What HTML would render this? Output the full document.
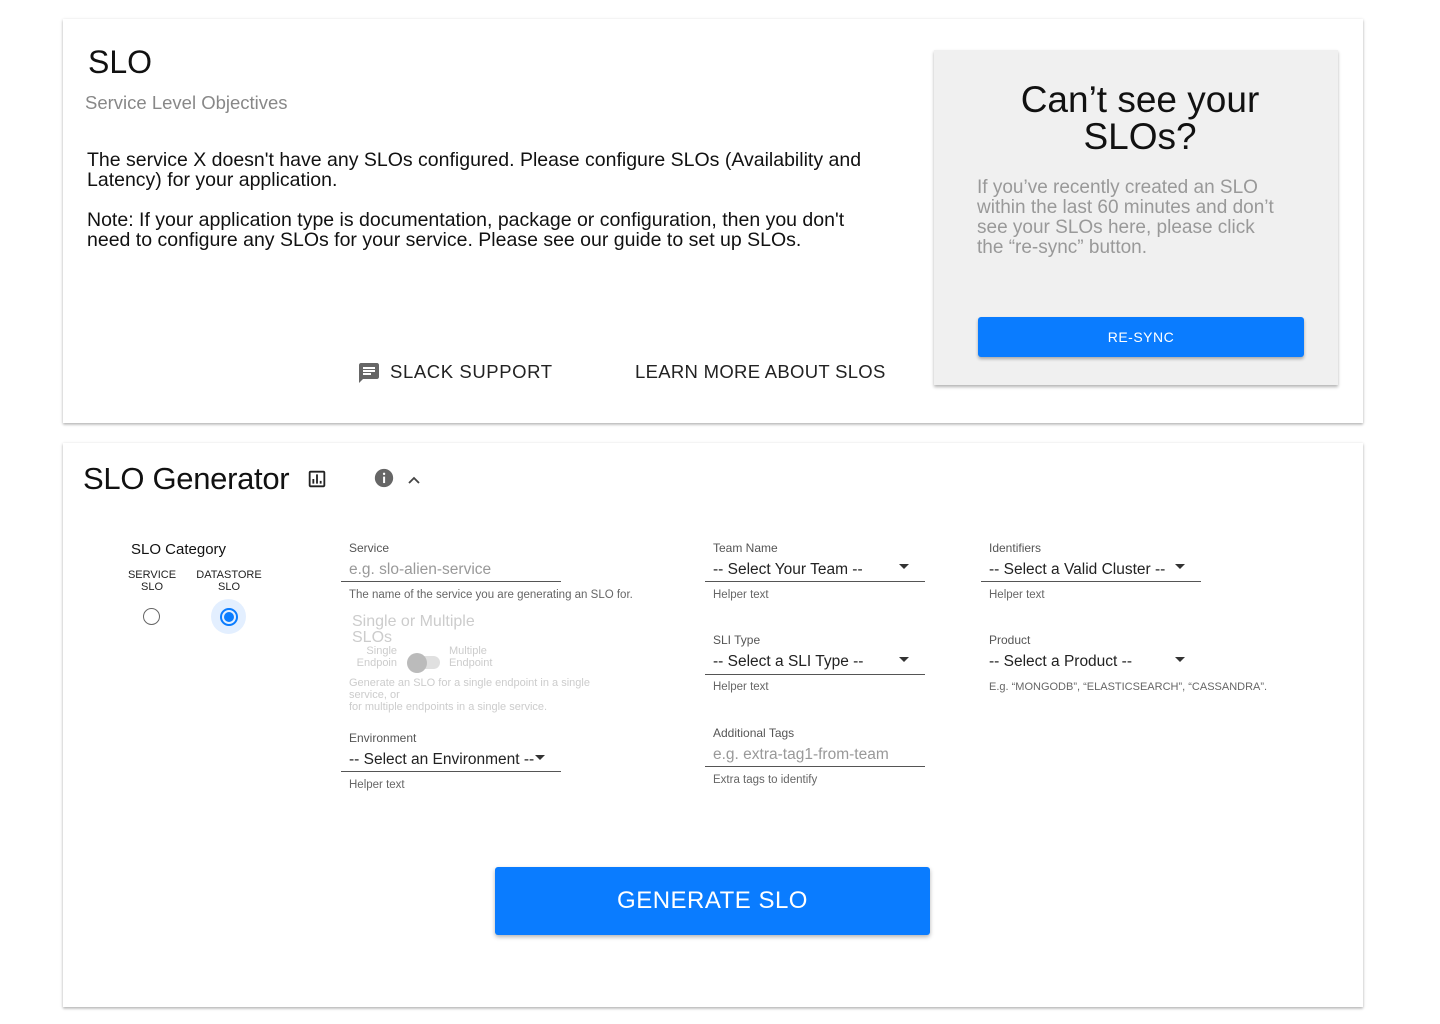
<!DOCTYPE html>
<html><head><style>
body{margin:0;width:1440px;height:1024px;background:#fff;font-family:"Liberation Sans",Roboto,sans-serif;position:relative;overflow:hidden;color:#222}
.a{position:absolute}
.card{position:absolute;background:#fff;box-shadow:0 1px 3px rgba(0,0,0,.25),0 2px 2px rgba(0,0,0,.1)}
.lab{font-size:12px;color:#555}
.help{font-size:11.5px;color:#666}
.line{border-bottom:1px solid #555}
.sel{font-size:15.5px;color:#222}
.caret{position:absolute;width:0;height:0;border-left:5px solid transparent;border-right:5px solid transparent;border-top:5px solid #333}
</style></head><body>
<div class="card" style="left:63px;top:19px;width:1300px;height:404px"></div>
<div class="a" style="left:88px;top:44px;font-size:32px;color:#111">SLO</div>
<div class="a" style="left:85px;top:92px;font-size:18.5px;color:#888">Service Level Objectives</div>
<div class="a" style="left:87px;top:150px;width:800px;font-size:19.5px;line-height:20px;color:#111">The service X doesn't have any SLOs configured. Please configure SLOs (Availability and Latency) for your application.<br><br>Note: If your application type is documentation, package or configuration, then you don't need to configure any SLOs for your service. Please see our guide to set up SLOs.</div>
<svg class="a" style="left:357px;top:361px" width="24" height="24" viewBox="0 0 24 24"><path fill="#666" d="M20 2H4c-1.1 0-2 .9-2 2v18l4-4h14c1.1 0 2-.9 2-2V4c0-1.1-.9-2-2-2zM6 9h12v2H6V9zm8 5H6v-2h8v2zm4-6H6V6h12v2z"/></svg>
<div class="a" style="left:390px;top:361px;font-size:18.5px;letter-spacing:.6px;color:#222">SLACK SUPPORT</div>
<div class="a" style="left:635px;top:361px;font-size:18.5px;letter-spacing:.3px;color:#222">LEARN MORE ABOUT SLOS</div>
<div class="a" style="left:934px;top:50px;width:404px;height:335px;background:#f0f0f0;box-shadow:0 2px 3px rgba(0,0,0,.3)"></div>
<div class="a" style="left:934px;top:81px;width:412px;text-align:center;font-size:37px;line-height:37px;color:#111">Can’t see your<br>SLOs?</div>
<div class="a" style="left:977px;top:178px;width:305px;font-size:19px;line-height:20px;color:#999">If you’ve recently created an SLO within the last 60 minutes and don’t see your SLOs here, please click the “re-sync” button.</div>
<div class="a" style="left:978px;top:317px;width:326px;height:40px;background:#0a7cff;border-radius:3px;box-shadow:0 2px 3px rgba(0,0,0,.3);color:#fff;font-size:14px;text-align:center;line-height:40px;letter-spacing:.5px">RE-SYNC</div>

<div class="card" style="left:63px;top:443px;width:1300px;height:564px"></div>
<div class="a" style="left:83px;top:461px;font-size:31px;color:#111;letter-spacing:-.3px">SLO Generator</div>
<svg class="a" style="left:306px;top:468px" width="22" height="22" viewBox="0 0 24 24"><path fill="#222" d="M19 3H5c-1.1 0-2 .9-2 2v14c0 1.1.9 2 2 2h14c1.1 0 2-.9 2-2V5c0-1.1-.9-2-2-2zm0 16H5V5h14v14zM7 12h2v5H7zm4-5h2v10h-2zm4 7h2v3h-2z"/></svg>
<svg class="a" style="left:373px;top:467px" width="22" height="22" viewBox="0 0 24 24"><circle cx="12" cy="12" r="10" fill="#666"/><rect x="11" y="10.5" width="2.2" height="7" fill="#fff"/><circle cx="12.1" cy="7.5" r="1.3" fill="#fff"/></svg>
<svg class="a" style="left:407px;top:473px" width="14" height="14" viewBox="0 0 14 14"><path d="M2 10l5-5 5 5" stroke="#444" stroke-width="1.8" fill="none"/></svg>

<div class="a" style="left:131px;top:541px;font-size:15px;color:#111">SLO Category</div>
<div class="a" style="left:124px;top:569px;width:56px;text-align:center;font-size:11px;line-height:12px">SERVICE<br>SLO</div>
<div class="a" style="left:193px;top:569px;width:72px;text-align:center;font-size:11px;line-height:12px">DATASTORE<br>SLO</div>
<div class="a" style="left:143px;top:608px;width:15px;height:15px;border:1.5px solid #666;border-radius:50%"></div>
<div class="a" style="left:211px;top:599px;width:35px;height:35px;background:#e3efff;border-radius:50%"></div>
<div class="a" style="left:220px;top:608px;width:14px;height:14px;border:2px solid #0a7cff;border-radius:50%"></div>
<div class="a" style="left:224px;top:612px;width:10px;height:10px;background:#0a7cff;border-radius:50%"></div>

<div class="a lab" style="left:349px;top:541px">Service</div>
<div class="a line" style="left:341px;top:558px;width:220px;height:23px"></div>
<div class="a" style="left:349px;top:561px;font-size:15.5px;color:#999">e.g. slo-alien-service</div>
<div class="a help" style="left:349px;top:589px">The name of the service you are generating an SLO for.</div>
<div class="a" style="left:352px;top:614px;font-size:16px;line-height:16px;color:#ccc">Single or Multiple<br>SLOs</div>
<div class="a" style="left:353px;top:645px;width:44px;text-align:right;font-size:11px;line-height:12px;color:#ccc">Single<br>Endpoin</div>
<div class="a" style="left:410px;top:656px;width:30px;height:13px;background:#e0e0e0;border-radius:7px"></div>
<div class="a" style="left:407px;top:653px;width:20px;height:20px;background:#bbb;border-radius:50%"></div>
<div class="a" style="left:449px;top:645px;font-size:11px;line-height:12px;color:#ccc">Multiple<br>Endpoint</div>
<div class="a" style="left:349px;top:677px;width:280px;font-size:11px;line-height:12px;color:#ccc">Generate an SLO for a single endpoint in a single service, or<br>for multiple endpoints in a single service.</div>
<div class="a lab" style="left:349px;top:731px">Environment</div>
<div class="a line" style="left:341px;top:748px;width:220px;height:23px"></div>
<div class="a sel" style="left:349px;top:751px">-- Select an Environment --</div>
<div class="caret" style="left:535px;top:755px"></div>
<div class="a help" style="left:349px;top:779px">Helper text</div>

<div class="a lab" style="left:713px;top:541px">Team Name</div>
<div class="a line" style="left:705px;top:558px;width:220px;height:23px"></div>
<div class="a sel" style="left:713px;top:561px">-- Select Your Team --</div>
<div class="caret" style="left:899px;top:564px"></div>
<div class="a help" style="left:713px;top:589px">Helper text</div>
<div class="a lab" style="left:713px;top:633px">SLI Type</div>
<div class="a line" style="left:705px;top:651px;width:220px;height:23px"></div>
<div class="a sel" style="left:713px;top:653px">-- Select a SLI Type --</div>
<div class="caret" style="left:899px;top:657px"></div>
<div class="a help" style="left:713px;top:681px">Helper text</div>
<div class="a lab" style="left:713px;top:726px">Additional Tags</div>
<div class="a line" style="left:705px;top:743px;width:220px;height:23px"></div>
<div class="a" style="left:713px;top:746px;font-size:15.5px;color:#999">e.g. extra-tag1-from-team</div>
<div class="a help" style="left:713px;top:774px">Extra tags to identify</div>

<div class="a lab" style="left:989px;top:541px">Identifiers</div>
<div class="a line" style="left:981px;top:558px;width:220px;height:23px"></div>
<div class="a sel" style="left:989px;top:561px">-- Select a Valid Cluster --</div>
<div class="caret" style="left:1175px;top:564px"></div>
<div class="a help" style="left:989px;top:589px">Helper text</div>
<div class="a lab" style="left:989px;top:633px">Product</div>
<div class="a sel" style="left:989px;top:653px">-- Select a Product --</div>
<div class="caret" style="left:1175px;top:657px"></div>
<div class="a help" style="left:989px;top:681px;font-size:11px">E.g. “MONGODB”, “ELASTICSEARCH”, “CASSANDRA”.</div>

<div class="a" style="left:495px;top:867px;width:435px;height:68px;background:#0a7cff;border-radius:3px;box-shadow:0 2px 4px rgba(0,0,0,.3);color:#fff;font-size:24px;text-align:center;line-height:68px;letter-spacing:.5px">GENERATE SLO</div>
</body></html>
